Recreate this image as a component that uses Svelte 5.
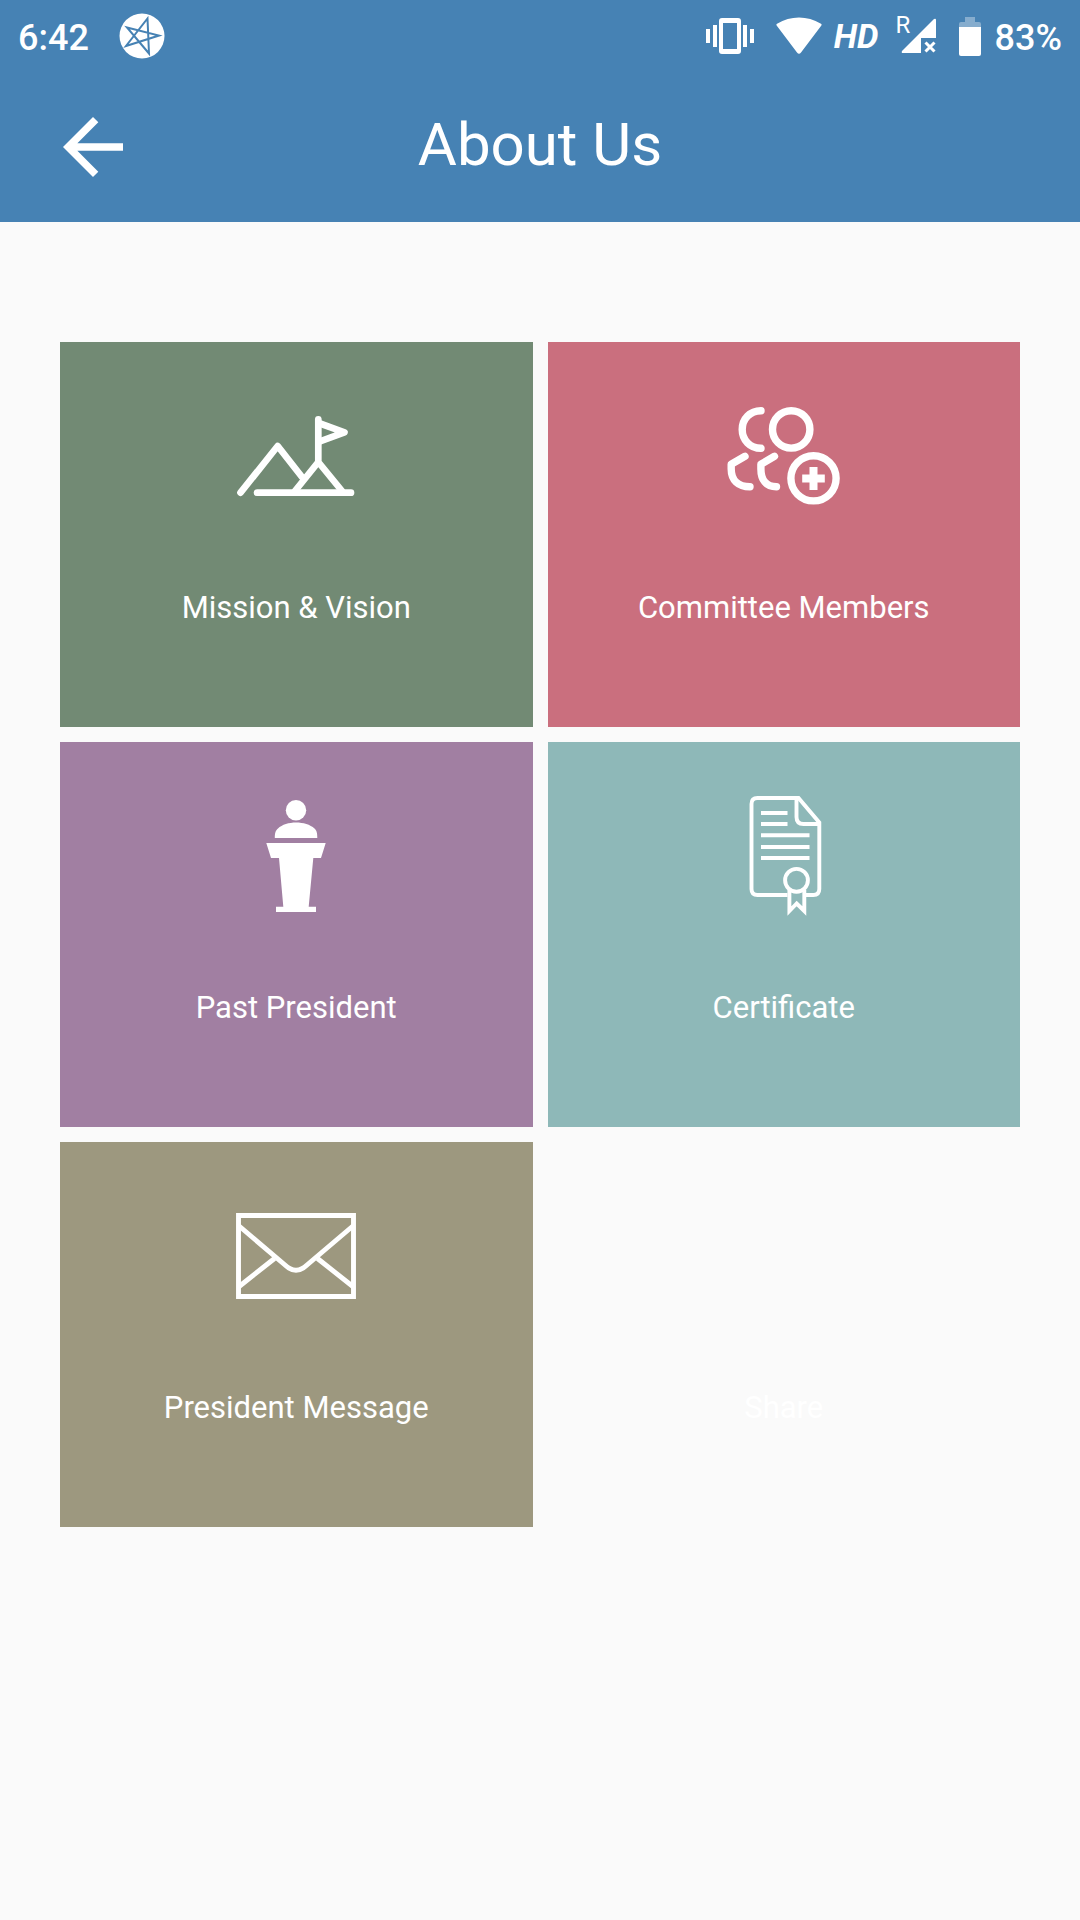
<script lang="ts">
	const tiles = [
		{ slug: 'mission', label: 'Mission & Vision' },
		{ slug: 'committee', label: 'Committee Members' },
		{ slug: 'past-president', label: 'Past President' },
		{ slug: 'certificate', label: 'Certificate' },
		{ slug: 'message', label: 'President Message' },
		{ slug: 'share', label: 'Share' },
	];
</script>

<svelte:head>
	<title>About Us</title>
</svelte:head>

<header>
	<div class="status">
		<span class="reading">6:42</span>
		<svg class="notice" width="46" height="46" viewBox="0 0 46 46">
			<circle cx="23" cy="23" r="22.5" fill="#fff" />
			<path d="M8 14.5L40 22.5L7 33L28.5 5.5L30 40.5Z" fill="none" stroke="#4682b4" stroke-width="2" />
		</svg>

		<div class="system">
			<svg width="50" height="40" viewBox="0 0 50 40" fill="#fff">
				<path fill-rule="evenodd" d="M17 2h16a3 3 0 0 1 3 3v30a3 3 0 0 1-3 3H17a3 3 0 0 1-3-3V5a3 3 0 0 1 3-3zM18 7v26h14V7z" />
				<path d="M1 13h4v14H1zM8 9h4v22H8zM38 9h4v22h-4zM45 13h4v14h-4z" />
			</svg>
			<svg class="wifi" width="46" height="40" viewBox="0 0 46 40" fill="#fff">
				<path d="M1 10Q-.5 8.500 1.500 7.500C14-.5 32-.5 44.500 7.500Q46.500 8.500 45 10L25 36.500Q23 39 21 36.500Z" />
			</svg>
			<span class="hd">HD</span>
			<div class="signal">
				<span class="roam">R</span>
				<svg width="36" height="36" viewBox="0 0 36 36">
					<path d="M33 1Q35 0 35 2V20H20V35H2Q0 35 1 33Z" fill="#fff" />
					<path d="M24.500 24.500L33.500 33.500M33.500 24.500L24.500 33.500" stroke="#fff" stroke-width="3" />
				</svg>
			</div>
			<svg class="battery" width="22" height="40" viewBox="0 0 22 40">
				<path d="M6 1h10v5h4a2 2 0 0 1 2 2v3H0V8a2 2 0 0 1 2-2h4z" fill="#fff" opacity=".35" />
				<path d="M0 11h22v27a2 2 0 0 1-2 2H2a2 2 0 0 1-2-2z" fill="#fff" />
			</svg>
			<span class="reading">83%</span>
		</div>
	</div>

	<div class="appbar">
		<button class="back" aria-label="Back">
			<svg width="90" height="90" viewBox="0 0 24 24" fill="#fff">
				<path d="M20 11H7.830l5.590-5.590L12 4l-8 8 8 8 1.410-1.410L7.830 13H20v-2z" />
			</svg>
		</button>
		<h1>About Us</h1>
	</div>
</header>

<main>
	{#each tiles as tile}
		<button class="tile {tile.slug}">
			<svg width="120" height="120" viewBox="0 0 120 120" fill="none" stroke="#fff" aria-hidden="true">
				{#if tile.slug === 'mission'}
					<g stroke-width="6.7" stroke-linecap="round" stroke-linejoin="round">
						<path d="M4.500 96.700L41.700 50L66 81M21 96.700H115" />
						<path d="M59 95L82.300 66L106 95M82.300 65V23.300" />
						<path d="M84 27.500L108.500 36.300L84 45.300" />
					</g>
				{:else if tile.slug === 'committee'}
					<g stroke-width="7.4" stroke-linecap="round" stroke-linejoin="round">
						<path d="M37 14.700C26 14.700 18.200 23 18.200 33.500S26 52.300 37 52.300" />
						<circle cx="67.200" cy="33.400" r="18.700" />
						<path d="M21 60.300L7.200 68.300V73C7.200 84 14 90.700 26 90.700" />
						<path d="M50.500 60.300L36.900 68.300V73C36.900 84 42 90.700 52.500 90.700" />
						<circle cx="89.500" cy="82.300" r="22.600" />
						<path d="M89.500 71V94M78.200 82.400H100.800" stroke-width="8" stroke-linecap="butt" />
					</g>
				{:else if tile.slug === 'past-president'}
					<g fill="#fff" stroke="none">
						<circle cx="60" cy="14.300" r="10.200" />
						<path d="M38.800 42C38.800 37 39.500 34.500 42 32.500C50 24.500 70 24.500 78.500 32.500C80.700 34.500 81.300 37 81.300 42Z" />
						<path d="M30.300 47H89.700L85 62H77.300L72.700 110.700H80V116H40V110.700H47.300L43 62H35Z" />
					</g>
				{:else if tile.slug === 'certificate'}
					<g stroke-width="3.9">
						<path d="M63.500 99H33.500Q27.500 99 27.500 93V8Q27.500 2 33.500 2H74.500L95.300 26.500V93Q95.300 99 89.300 99H81" />
						<path d="M72.500 2V21Q72.500 28 79.500 28H95" />
						<path d="M37 17H63.500M37 28H63.500M37 39.300H85.500M37 51H85.500M37 62H85.500" />
						<circle cx="72.500" cy="84.300" r="11.400" />
						<path d="M65.400 94V115L72.700 107.500L80.300 115V94" />
					</g>
				{:else if tile.slug === 'message'}
					<g stroke-width="4.9">
						<path d="M2.500 19.500H117.500V100.500H2.500Z" />
						<path d="M2.500 29.500L49 69Q60 79.500 71 69L117.500 29.500" />
						<path d="M38.500 62.500L2.500 91M81.500 62.500L117.500 91" />
					</g>
				{/if}
			</svg>
			<span class="label">{tile.label}</span>
		</button>
	{/each}
</main>

<style>
	:global(body) { background: #fafafa; font-family: Roboto, "Liberation Sans", sans-serif; }

	header { background: #4682b4; color: #fff; }
	.status {
		display: flex; align-items: center;
		height: 72px; padding: 0 18px;
		font-size: 36px; line-height: 40px; font-weight: 500;
	}
	.reading { padding-top: 4px; }
	.notice { margin-left: 30px; }
	.system { display: flex; align-items: center; margin-left: auto; }
	.wifi { margin-left: 21px; }
	.hd { margin: 0 18px 0 12px; font-size: 34px; font-weight: 700; font-style: italic; }
	.signal { position: relative; padding-left: 4px; display: flex; }
	.roam { position: absolute; left: -1px; top: -5px; font-size: 24px; line-height: 24px; font-weight: 400; }
	.battery { margin: 0 14px 0 22px; }

	.appbar { display: grid; grid-template-columns: 90px 1fr 90px; align-items: center; height: 150px; padding: 0 48px; }
	.back { display: flex; padding: 0; border: 0; background: none; cursor: pointer; }
	h1 { margin: 0; padding-bottom: 4px; font-size: 60px; line-height: 80px; font-weight: 400; text-align: center; }

	main { display: grid; grid-template-columns: 1fr 1fr; gap: 15px; padding: 120px 60px; }
	.tile {
		display: flex; flex-direction: column; align-items: center; gap: 72px;
		height: 385px; padding: 54px 0 0;
		border: 0; color: #fff; cursor: pointer;
		font-family: inherit; font-size: 31px; line-height: 40px;
	}
	.mission { background: #728a74; }
	.committee { background: #ca6f7e; }
	.past-president { background: #a17fa2; }
	.certificate { background: #8eb8b8; }
	.message { background: #9d987f; }
	.share { background: #fafafa; }
</style>
